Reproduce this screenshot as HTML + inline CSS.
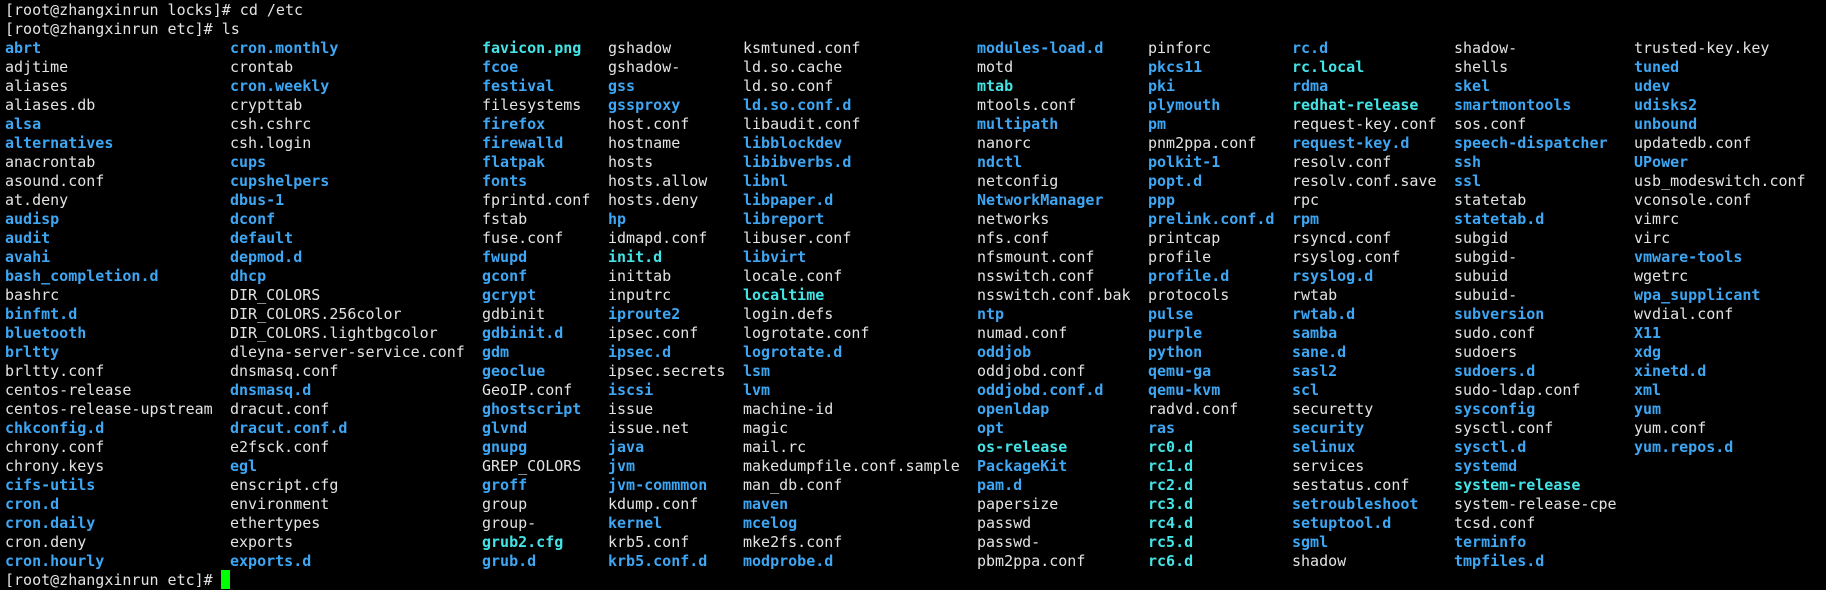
<!DOCTYPE html>
<html><head><meta charset="utf-8"><style>
html,body{margin:0;padding:0;background:#000;width:1826px;height:589px;overflow:hidden;}
pre{position:absolute;margin:0;font-family:"DejaVu Sans Mono","Liberation Mono",monospace;font-size:15px;line-height:19px;color:#e3e3e3;white-space:pre;}
b{color:#3ea6f2;font-weight:bold;}
i{font-style:normal;color:#44e4e6;font-weight:bold;}
#cur{position:absolute;left:221px;top:570px;width:9px;height:19px;background:#00ff00;}
</style></head><body>
<pre style="left:5px;top:1px">[root@zhangxinrun locks]# cd /etc
[root@zhangxinrun etc]# ls</pre>
<pre style="left:5px;top:39px"><b>abrt</b>
adjtime
aliases
aliases.db
<b>alsa</b>
<b>alternatives</b>
anacrontab
asound.conf
at.deny
<b>audisp</b>
<b>audit</b>
<b>avahi</b>
<b>bash_completion.d</b>
bashrc
<b>binfmt.d</b>
<b>bluetooth</b>
<b>brltty</b>
brltty.conf
centos-release
centos-release-upstream
<b>chkconfig.d</b>
chrony.conf
chrony.keys
<b>cifs-utils</b>
<b>cron.d</b>
<b>cron.daily</b>
cron.deny
<b>cron.hourly</b>
[root@zhangxinrun etc]# </pre>
<pre style="left:230px;top:39px"><b>cron.monthly</b>
crontab
<b>cron.weekly</b>
crypttab
csh.cshrc
csh.login
<b>cups</b>
<b>cupshelpers</b>
<b>dbus-1</b>
<b>dconf</b>
<b>default</b>
<b>depmod.d</b>
<b>dhcp</b>
DIR_COLORS
DIR_COLORS.256color
DIR_COLORS.lightbgcolor
dleyna-server-service.conf
dnsmasq.conf
<b>dnsmasq.d</b>
dracut.conf
<b>dracut.conf.d</b>
e2fsck.conf
<b>egl</b>
enscript.cfg
environment
ethertypes
exports
<b>exports.d</b></pre>
<pre style="left:482px;top:39px"><i>favicon.png</i>
<b>fcoe</b>
<b>festival</b>
filesystems
<b>firefox</b>
<b>firewalld</b>
<b>flatpak</b>
<b>fonts</b>
fprintd.conf
fstab
fuse.conf
<b>fwupd</b>
<b>gconf</b>
<b>gcrypt</b>
gdbinit
<b>gdbinit.d</b>
<b>gdm</b>
<b>geoclue</b>
GeoIP.conf
<b>ghostscript</b>
<b>glvnd</b>
<b>gnupg</b>
GREP_COLORS
<b>groff</b>
group
group-
<i>grub2.cfg</i>
<b>grub.d</b></pre>
<pre style="left:608px;top:39px">gshadow
gshadow-
<b>gss</b>
<b>gssproxy</b>
host.conf
hostname
hosts
hosts.allow
hosts.deny
<b>hp</b>
idmapd.conf
<i>init.d</i>
inittab
inputrc
<b>iproute2</b>
ipsec.conf
<b>ipsec.d</b>
ipsec.secrets
<b>iscsi</b>
issue
issue.net
<b>java</b>
<b>jvm</b>
<b>jvm-commmon</b>
kdump.conf
<b>kernel</b>
krb5.conf
<b>krb5.conf.d</b></pre>
<pre style="left:743px;top:39px">ksmtuned.conf
ld.so.cache
ld.so.conf
<b>ld.so.conf.d</b>
libaudit.conf
<b>libblockdev</b>
<b>libibverbs.d</b>
<b>libnl</b>
<b>libpaper.d</b>
<b>libreport</b>
libuser.conf
<b>libvirt</b>
locale.conf
<i>localtime</i>
login.defs
logrotate.conf
<b>logrotate.d</b>
<b>lsm</b>
<b>lvm</b>
machine-id
magic
mail.rc
makedumpfile.conf.sample
man_db.conf
<b>maven</b>
<b>mcelog</b>
mke2fs.conf
<b>modprobe.d</b></pre>
<pre style="left:977px;top:39px"><b>modules-load.d</b>
motd
<i>mtab</i>
mtools.conf
<b>multipath</b>
nanorc
<b>ndctl</b>
netconfig
<b>NetworkManager</b>
networks
nfs.conf
nfsmount.conf
nsswitch.conf
nsswitch.conf.bak
<b>ntp</b>
numad.conf
<b>oddjob</b>
oddjobd.conf
<b>oddjobd.conf.d</b>
<b>openldap</b>
<b>opt</b>
<i>os-release</i>
<b>PackageKit</b>
<b>pam.d</b>
papersize
passwd
passwd-
pbm2ppa.conf</pre>
<pre style="left:1148px;top:39px">pinforc
<b>pkcs11</b>
<b>pki</b>
<b>plymouth</b>
<b>pm</b>
pnm2ppa.conf
<b>polkit-1</b>
<b>popt.d</b>
<b>ppp</b>
<b>prelink.conf.d</b>
printcap
profile
<b>profile.d</b>
protocols
<b>pulse</b>
<b>purple</b>
<b>python</b>
<b>qemu-ga</b>
<b>qemu-kvm</b>
radvd.conf
<b>ras</b>
<i>rc0.d</i>
<i>rc1.d</i>
<i>rc2.d</i>
<i>rc3.d</i>
<i>rc4.d</i>
<i>rc5.d</i>
<i>rc6.d</i></pre>
<pre style="left:1292px;top:39px"><b>rc.d</b>
<i>rc.local</i>
<b>rdma</b>
<i>redhat-release</i>
request-key.conf
<b>request-key.d</b>
resolv.conf
resolv.conf.save
rpc
<b>rpm</b>
rsyncd.conf
rsyslog.conf
<b>rsyslog.d</b>
rwtab
<b>rwtab.d</b>
<b>samba</b>
<b>sane.d</b>
<b>sasl2</b>
<b>scl</b>
securetty
<b>security</b>
<b>selinux</b>
services
sestatus.conf
<b>setroubleshoot</b>
<b>setuptool.d</b>
<b>sgml</b>
shadow</pre>
<pre style="left:1454px;top:39px">shadow-
shells
<b>skel</b>
<b>smartmontools</b>
sos.conf
<b>speech-dispatcher</b>
<b>ssh</b>
<b>ssl</b>
statetab
<b>statetab.d</b>
subgid
subgid-
subuid
subuid-
<b>subversion</b>
sudo.conf
sudoers
<b>sudoers.d</b>
sudo-ldap.conf
<b>sysconfig</b>
sysctl.conf
<b>sysctl.d</b>
<b>systemd</b>
<i>system-release</i>
system-release-cpe
tcsd.conf
<b>terminfo</b>
<b>tmpfiles.d</b></pre>
<pre style="left:1634px;top:39px">trusted-key.key
<b>tuned</b>
<b>udev</b>
<b>udisks2</b>
<b>unbound</b>
updatedb.conf
<b>UPower</b>
usb_modeswitch.conf
vconsole.conf
vimrc
virc
<b>vmware-tools</b>
wgetrc
<b>wpa_supplicant</b>
wvdial.conf
<b>X11</b>
<b>xdg</b>
<b>xinetd.d</b>
<b>xml</b>
<b>yum</b>
yum.conf
<b>yum.repos.d</b></pre>
<div id="cur"></div>
</body></html>
